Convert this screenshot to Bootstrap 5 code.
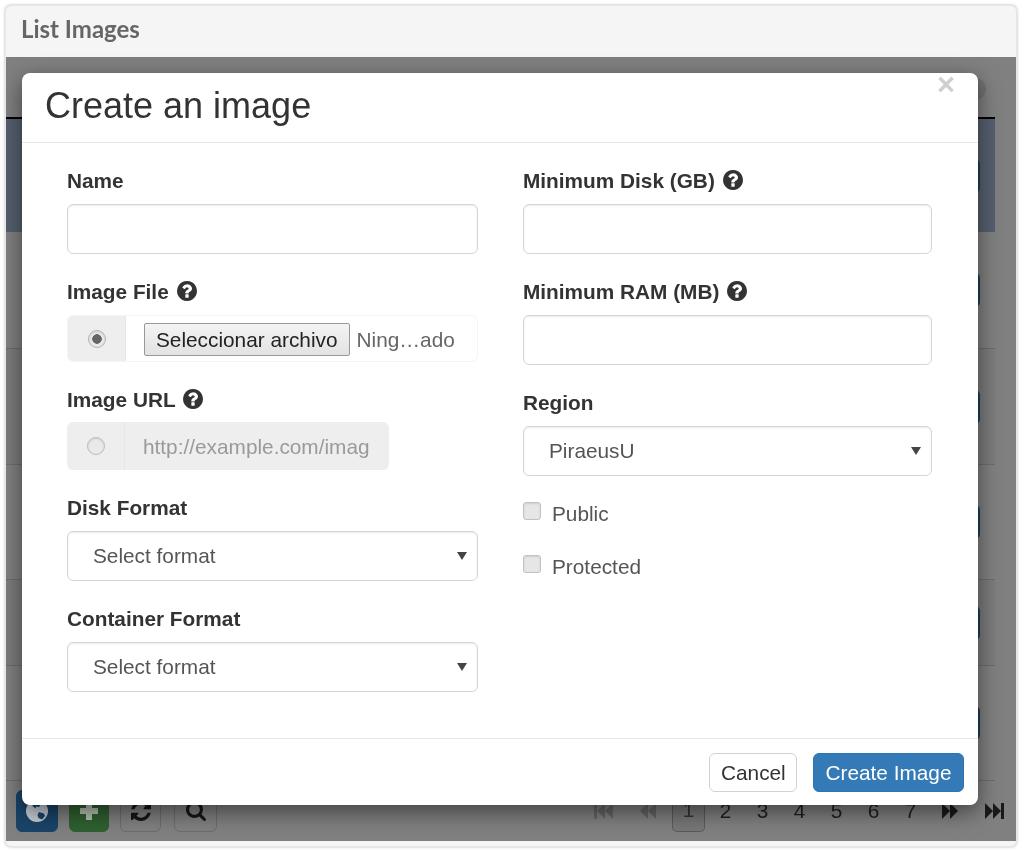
<!DOCTYPE html>
<html lang="en">
<head>
<meta charset="utf-8">
<title>Create an image</title>
<link rel="stylesheet" href="https://cdn.jsdelivr.net/npm/bootstrap@5.3.0/dist/css/bootstrap.min.css">
<style>
html,body{height:850px;overflow:hidden;background:#fff}
body{font-family:"Liberation Sans",Arial,sans-serif;font-size:20.8px;line-height:30px;color:#333}
.shell{width:1012px;height:842px;margin:5px 0 0 5px;border:1px solid #e6e6e6;border-radius:6px;background:#f5f5f5;box-shadow:0 0 3px rgba(0,0,0,.28);overflow:hidden;filter:blur(.4px)}
.shell-head{height:51px;padding:8px 15px 0;font-family:Lato,"Open Sans",sans-serif;font-size:24px;line-height:30px;font-weight:700;color:#666}
.stage{height:784px;background:#808080}
.top-strip{height:60px;padding:21px 30px 0 0}
.sort-dot{width:22px;height:22px;border-radius:50%;background:#727272}
.list-table{width:989px;border-top:2px solid #000}
.list-row{padding-right:15px;border-bottom:1px solid #6c6c6c}
.list-row.tall-a{height:113px;background:#56606f;border-bottom:0}
.list-row.tall-d{height:117px}
.list-row.tall-b{height:116px}
.list-row.tall-c{height:115px}
.list-row.short{height:86px}
.list-row.striped{background:#7c7c7c}
.peek-btn{width:44px;height:34px;border-radius:5px;background:#1a3d5c}
.bottom-bar{height:60px;padding:9px 0 0 10px}
.tool{height:42px;border-radius:6px;border:1.5px solid #6c6c6c;color:#1a1a1a;flex:none}
.tool-blue{width:42px;background:#1a4468;border-color:#1a4468;margin-right:11px}
.tool-green{width:40px;background:#2f6030;border-color:#2f6030;margin-right:11px}
.tool-plain{width:41px;margin-right:13px}
.tool-wide{width:43px}
.pager{margin-left:auto;color:#1f1f1f;font-size:20.8px;line-height:42px}
.pg{width:37px;height:42px;text-align:center;flex:none}
.pg-on{width:33px;margin:0 2px;background:#777;border:1.5px solid #5a5a5a;border-top:0;border-radius:0 0 5px 5px;color:#333;line-height:40px}
.pg-ico{height:42px;flex:none}
.pg-first{width:44px;color:#666}
.pg-prev{width:45px;color:#666}
.pg-next{width:41px;color:#1a1a1a}
.pg-last{width:43px;margin-left:3px;color:#1a1a1a}
.dialog-wrap{left:16px;top:16px;width:956px;height:732px}
.modal-content.sheet{height:732px;background:#fff;border:0;border-radius:8px;box-shadow:0 7px 22px rgba(0,0,0,.5)}
.modal-header.sheet-head{height:70px;padding:0 23px;align-items:flex-start;border-bottom:1.5px solid #e8e8e8}
.sheet-title{font-size:36px;line-height:40px;font-weight:400;margin:13px 0 0;color:#333}
.x-close{font-weight:700;font-size:31px;line-height:24px;color:#cfcfcf;background:none;border:0;padding:0;margin-top:0}
.modal-body.sheet-body{flex:none;height:595px;padding:23px 45px}
.form-row{--bs-gutter-x:44px;margin-left:-22px;margin-right:-22px}
.form-row>.col-right{padding-left:23px;padding-right:23px}
.fld{margin-bottom:23px}
.fld-region{margin-bottom:11px}
.fld-label{display:block;font-weight:700;line-height:30px;margin-bottom:8px;color:#333}
.fld-url .fld-label{margin-bottom:7px}
.q-ico{width:20px;height:20px;margin-left:2px;vertical-align:-2px;fill:#333}
.form-control.fld-input,.form-select.fld-input{height:50px;border:1.5px solid #d5d5d5;border-radius:6px;font-size:20.8px;color:#555;box-shadow:inset 0 1px 2px rgba(0,0,0,.08)}
.form-select.fld-input{padding:0 30px 0 25px;background-image:url("data:image/svg+xml,%3Csvg xmlns='http://www.w3.org/2000/svg' viewBox='0 0 10 8'%3E%3Cpath fill='%23444' d='M0 0h10L5 8z'/%3E%3C/svg%3E");background-size:10px 8px;background-position:right 10px top 20px}
.file-grp{height:47px;border:1px solid #f4f4f4;border-radius:6px;overflow:hidden;background:#fff}
.file-body{padding-top:2px}
.url-grp{width:322px;height:48px;border-radius:6px;overflow:hidden}
.addon{width:58px;flex:none;background:#eee;border-right:1px solid #e6e6e6}
.form-check-input.rad{width:18px;height:18px;margin:0;border:1.5px solid #bdbdbd;background:#e9e9e9;box-shadow:inset 0 1px 2px rgba(0,0,0,.12)}
.form-check-input.rad:checked{background-color:#e9e9e9;border-color:#b5b5b5;background-image:radial-gradient(circle,#666 0,#666 4.5px,transparent 5px)}
.file-btn{height:33px;margin-left:18px;padding:0 11px;border:1.5px solid #999;border-radius:2px;background:linear-gradient(#f4f4f4,#e2e2e2);font-size:20.8px;line-height:28px;color:#222;white-space:nowrap}
.file-name{margin-left:7px;color:#666;white-space:nowrap}
.form-control.url-input{height:48px;padding:2px 17px 0 18px;border:0;border-radius:0;background:#eee;font-size:20.8px}
.form-control.url-input::placeholder{color:#9a9a9a;opacity:1}
.chk-row{height:53px;padding-top:1px;color:#555}
.form-check-input.chk{width:18px;height:18px;margin:0 11px 0 0;flex:none;border:1.5px solid #c2c2c2;border-radius:3px;background:#e6e6e6;box-shadow:inset 0 1px 2px rgba(0,0,0,.1);transform:translateY(-3px)}
.modal-footer.sheet-foot{height:67px;padding:14px 14px 14px 0;gap:16px;border-top:1.5px solid #e8e8e8}
.modal-footer.sheet-foot>.act{height:39px;margin:0;padding:0 11px;border-radius:6px;font-size:20.8px;line-height:35px}
.act-cancel{width:88px;background:#fff;border:1.5px solid #d2d2d2;color:#333}
.act-create{width:151px;background:#337ab7;border:1.5px solid #2e74b0;color:#fff}
</style>
</head>
<body>
<div class="shell d-flex flex-column">
  <div class="shell-head">List Images</div>
  <div class="stage position-relative">
    <div class="top-strip d-flex justify-content-end"><div class="sort-dot"></div></div>
    <div class="list-table">
      <div class="list-row tall-a d-flex align-items-center justify-content-end"><div class="peek-btn"></div></div>
      <div class="list-row tall-d d-flex align-items-center justify-content-end"><div class="peek-btn"></div></div>
      <div class="list-row tall-b striped d-flex align-items-center justify-content-end"><div class="peek-btn"></div></div>
      <div class="list-row tall-c d-flex align-items-center justify-content-end"><div class="peek-btn"></div></div>
      <div class="list-row short striped d-flex align-items-center justify-content-end"><div class="peek-btn"></div></div>
      <div class="list-row tall-c d-flex align-items-center justify-content-end"><div class="peek-btn"></div></div>
    </div>
    <div class="bottom-bar d-flex">
      <div class="tool tool-blue d-flex align-items-center justify-content-center">
        <svg width="24" height="24" viewBox="0 0 24 24"><circle cx="12" cy="12" r="11" fill="#c4ccd4"/><path fill="#1a4468" d="M9 2l6-.5 1.500 3-2.500 3.500-3-.5-.5 2-3-2.500zM14 13l5 1.500 1 2.500-3 3.500-3.500-1.500-1-3z"/></svg>
      </div>
      <div class="tool tool-green d-flex align-items-center justify-content-center">
        <svg width="20" height="20" viewBox="0 0 20 20"><path fill="#b4c2b0" d="M7 1h6v6h6v6h-6v6H7v-6H1V7h6z"/></svg>
      </div>
      <div class="tool tool-plain d-flex align-items-center justify-content-center">
        <svg width="20" height="20" viewBox="0 128 1536 1536" fill="#161616"><path d="M1511 1056q0 5-1 7-64 268-268 434.500t-478 166.500q-146 0-282.500-55t-243.500-157l-129 129q-19 19-45 19t-45-19-19-45v-448q0-26 19-45t45-19h448q26 0 45 19t19 45-19 45l-137 137q71 66 161 102t187 36q134 0 250-65t186-179q11-17 53-117 8-23 30-23h192q13 0 22.500 9.500t9.500 22.500zm25-800v448q0 26-19 45t-45 19h-448q-26 0-45-19t-19-45 19-45l138-138q-148-137-349-137-134 0-250 65t-186 179q-11 17-53 117-8 23-30 23h-199q-13 0-22.500-9.500t-9.500-22.500v-7q65-268 270-434.500t480-166.500q146 0 284 55.500t245 156.500l130-129q19-19 45-19t45 19 19 45z"/></svg>
      </div>
      <div class="tool tool-plain tool-wide d-flex align-items-center justify-content-center">
        <svg width="20" height="20" viewBox="0 128 1664 1664" fill="#161616"><path d="M1152 832q0-185-131.500-316.500T704 384 387.500 515.500 256 832t131.500 316.500T704 1280t316.500-131.500T1152 832zm512 832q0 52-38 90t-90 38q-54 0-90-38l-343-342q-179 124-399 124-143 0-273.500-55.500t-225-150-150-225T0 832t55.500-273.500 150-225 225-150T704 128t273.500 55.500 225 150 150 225T1408 832q0 220-124 399l343 343q37 37 37 90z"/></svg>
      </div>
      <div class="pager d-flex">
        <div class="pg-ico pg-first d-flex align-items-center justify-content-center"><svg width="20" height="16" viewBox="0 0 20 16" fill="currentColor"><path d="M1 0h3v16H1zM12 0v16L4 8zM20 0v16l-8-8z"/></svg></div>
        <div class="pg-ico pg-prev d-flex align-items-center justify-content-center"><svg width="16" height="16" viewBox="0 0 16 16" fill="currentColor"><path d="M8 0v16L0 8zM16 0v16L8 8z"/></svg></div>
        <div class="pg pg-on">1</div>
        <div class="pg">2</div>
        <div class="pg">3</div>
        <div class="pg">4</div>
        <div class="pg">5</div>
        <div class="pg">6</div>
        <div class="pg">7</div>
        <div class="pg-ico pg-next d-flex align-items-center justify-content-center"><svg width="16" height="16" viewBox="0 0 16 16" fill="currentColor"><path d="M0 0l8 8-8 8zM8 0l8 8-8 8z"/></svg></div>
        <div class="pg-ico pg-last d-flex align-items-center justify-content-center"><svg width="20" height="16" viewBox="0 0 20 16" fill="currentColor"><path d="M0 0l8 8-8 8zM8 0l8 8-8 8zM16 0h3v16h-3z"/></svg></div>
      </div>
    </div>

    <div class="dialog-wrap position-absolute">
      <div class="modal-content sheet">
        <div class="modal-header sheet-head justify-content-between">
          <h4 class="sheet-title">Create an image</h4>
          <button type="button" class="x-close" aria-label="Close">×</button>
        </div>
        <div class="modal-body sheet-body">
          <form class="row form-row">
            <div class="col-6">
              <div class="fld"><label class="fld-label">Name</label><input type="text" class="form-control fld-input"></div>
              <div class="fld">
                <label class="fld-label">Image File <svg class="q-ico" viewBox="0 128 1536 1536"><path d="M896 1376v-192q0-14-9-23t-23-9H672q-14 0-23 9t-9 23v192q0 14 9 23t23 9h192q14 0 23-9t9-23zm256-672q0-88-55.500-163T958 425t-170-41q-243 0-371 213-15 24 8 42l132 100q7 6 19 6 16 0 25-12 53-68 86-92 34-24 86-24 48 0 85.500 26t37.500 59q0 38-20 61t-68 45q-63 28-115.500 86.500T640 1020v36q0 14 9 23t23 9h192q14 0 23-9t9-23q0-19 21.500-49.500T972 957q32-18 49-28.500t46-35 44.500-48 28-60.500 12.500-81zm384 192q0 209-103 385.500T1153.500 1561 768 1664t-385.500-103T103 1281.500 0 896t103-385.500T382.500 231 768 128t385.500 103T1433 510.500 1536 896z"/></svg></label>
                <div class="file-grp d-flex">
                  <div class="addon d-flex align-items-center justify-content-center"><input class="form-check-input rad" type="radio" name="src" checked></div>
                  <div class="file-body d-flex align-items-center"><button type="button" class="file-btn">Seleccionar archivo</button><span class="file-name">Ning…ado</span></div>
                </div>
              </div>
              <div class="fld fld-url">
                <label class="fld-label">Image URL <svg class="q-ico" viewBox="0 128 1536 1536"><path d="M896 1376v-192q0-14-9-23t-23-9H672q-14 0-23 9t-9 23v192q0 14 9 23t23 9h192q14 0 23-9t9-23zm256-672q0-88-55.500-163T958 425t-170-41q-243 0-371 213-15 24 8 42l132 100q7 6 19 6 16 0 25-12 53-68 86-92 34-24 86-24 48 0 85.500 26t37.500 59q0 38-20 61t-68 45q-63 28-115.500 86.500T640 1020v36q0 14 9 23t23 9h192q14 0 23-9t9-23q0-19 21.500-49.500T972 957q32-18 49-28.500t46-35 44.500-48 28-60.500 12.500-81zm384 192q0 209-103 385.500T1153.500 1561 768 1664t-385.500-103T103 1281.500 0 896t103-385.500T382.500 231 768 128t385.500 103T1433 510.500 1536 896z"/></svg></label>
                <div class="url-grp d-flex">
                  <div class="addon d-flex align-items-center justify-content-center"><input class="form-check-input rad" type="radio" name="src"></div>
                  <input type="text" class="form-control url-input" placeholder="http://example.com/imag" disabled>
                </div>
              </div>
              <div class="fld"><label class="fld-label">Disk Format</label><select class="form-select fld-input"><option>Select format</option></select></div>
              <div class="fld mb-0"><label class="fld-label">Container Format</label><select class="form-select fld-input"><option>Select format</option></select></div>
            </div>
            <div class="col-6 col-right">
              <div class="fld">
                <label class="fld-label">Minimum Disk (GB) <svg class="q-ico" viewBox="0 128 1536 1536"><path d="M896 1376v-192q0-14-9-23t-23-9H672q-14 0-23 9t-9 23v192q0 14 9 23t23 9h192q14 0 23-9t9-23zm256-672q0-88-55.500-163T958 425t-170-41q-243 0-371 213-15 24 8 42l132 100q7 6 19 6 16 0 25-12 53-68 86-92 34-24 86-24 48 0 85.500 26t37.500 59q0 38-20 61t-68 45q-63 28-115.500 86.500T640 1020v36q0 14 9 23t23 9h192q14 0 23-9t9-23q0-19 21.500-49.500T972 957q32-18 49-28.500t46-35 44.500-48 28-60.500 12.500-81zm384 192q0 209-103 385.500T1153.500 1561 768 1664t-385.500-103T103 1281.500 0 896t103-385.500T382.500 231 768 128t385.500 103T1433 510.500 1536 896z"/></svg></label>
                <input type="text" class="form-control fld-input">
              </div>
              <div class="fld">
                <label class="fld-label">Minimum RAM (MB) <svg class="q-ico" viewBox="0 128 1536 1536"><path d="M896 1376v-192q0-14-9-23t-23-9H672q-14 0-23 9t-9 23v192q0 14 9 23t23 9h192q14 0 23-9t9-23zm256-672q0-88-55.500-163T958 425t-170-41q-243 0-371 213-15 24 8 42l132 100q7 6 19 6 16 0 25-12 53-68 86-92 34-24 86-24 48 0 85.500 26t37.500 59q0 38-20 61t-68 45q-63 28-115.500 86.500T640 1020v36q0 14 9 23t23 9h192q14 0 23-9t9-23q0-19 21.500-49.500T972 957q32-18 49-28.500t46-35 44.500-48 28-60.500 12.500-81zm384 192q0 209-103 385.500T1153.500 1561 768 1664t-385.500-103T103 1281.500 0 896t103-385.500T382.500 231 768 128t385.500 103T1433 510.500 1536 896z"/></svg></label>
                <input type="text" class="form-control fld-input">
              </div>
              <div class="fld fld-region"><label class="fld-label">Region</label><select class="form-select fld-input"><option>PiraeusU</option></select></div>
              <div class="chk-row d-flex align-items-center"><input class="form-check-input chk" type="checkbox"><span>Public</span></div>
              <div class="chk-row d-flex align-items-center"><input class="form-check-input chk" type="checkbox"><span>Protected</span></div>
            </div>
          </form>
        </div>
        <div class="modal-footer sheet-foot">
          <button type="button" class="btn act act-cancel">Cancel</button>
          <button type="button" class="btn act act-create">Create Image</button>
        </div>
      </div>
    </div>
  </div>
</div>
<script src="https://cdn.jsdelivr.net/npm/bootstrap@5.3.0/dist/js/bootstrap.bundle.min.js"></script>
</body>
</html>
